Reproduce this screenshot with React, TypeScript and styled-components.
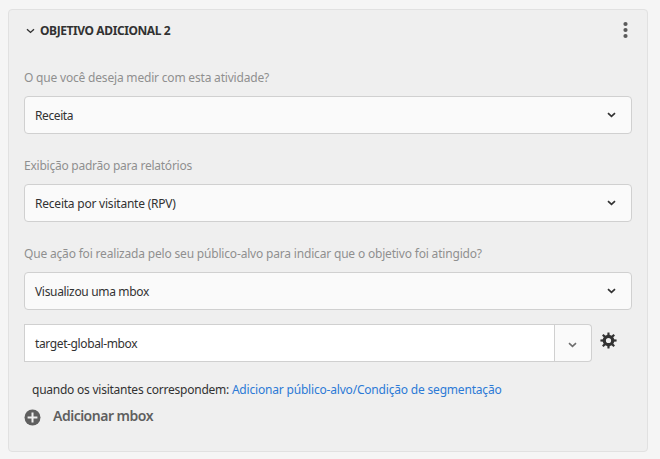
import React from "react";
import styled, { createGlobalStyle } from "styled-components";

const Global = createGlobalStyle`
  * { box-sizing: border-box; }
  body {
    margin: 0;
    background: #f5f5f5;
    color: #323232;
    font-family: "Noto Sans", "Open Sans", sans-serif;
    font-size: 12px;
  }
  button { margin: 0; padding: 0; border: 0; background: none; font: inherit; color: inherit; letter-spacing: inherit; }
  svg { display: block; flex: none; }
`;

const Page = styled.main`
  height: 459px;
  padding: 9px 12px 7px 8px;
`;

const Panel = styled.section`
  height: 443px;
  padding: 0 15px;
  border: 1px solid #e1e1e1;
  border-radius: 4px;
  background: #efefef;
`;

const Header = styled.header`
  display: flex;
  align-items: center;
  height: 41px;
  margin-bottom: 7px;
  padding: 0 4px 0 2px;
`;

const Title = styled.h2`
  flex: 1;
  margin: 0 0 0 5px;
  font-size: 12px;
  font-weight: 700;
  letter-spacing: -0.41px;
`;

const MenuButton = styled.button`
  padding-bottom: 2px;
`;

const Field = styled.div`
  height: 76px;
  margin-bottom: 12px;
`;

const Label = styled.div<{ $tracking: number }>`
  height: 38px;
  line-height: 39px;
  color: #8f8f8f;
  letter-spacing: ${(p) => p.$tracking}px;
  white-space: nowrap;
`;

const Select = styled.button<{ $tracking: number }>`
  display: flex;
  align-items: center;
  justify-content: space-between;
  width: 100%;
  height: 38px;
  padding: 0 15px 0 10px;
  border: 1px solid #d0d0d0;
  border-radius: 4px;
  background: #fafafa;
  letter-spacing: ${(p) => p.$tracking}px;
`;

const MboxRow = styled.div`
  display: flex;
  height: 38px;
  margin-top: 14px;
`;

const MboxName = styled.div`
  display: flex;
  align-items: center;
  width: 531px;
  padding-left: 10px;
  border: 1px solid #d0d0d0;
  background: #fff;
  letter-spacing: -0.38px;
`;

const MboxToggle = styled.button`
  display: flex;
  align-items: center;
  justify-content: center;
  width: 37px;
  padding: 4px 1px 0 0;
  border: 1px solid #d0d0d0;
  border-left: 0;
  border-radius: 0 4px 4px 0;
  background: #fafafa;
  color: #6e6e6e;
`;

const GearButton = styled.button`
  align-self: flex-start;
  margin: 8px 0 0 8px;
`;

const Audience = styled.p`
  margin: 18px 0 0 8px;
  line-height: 20px;
  letter-spacing: -0.24px;
  white-space: nowrap;
`;

const Link = styled.a`
  color: #2c7ad6;
  letter-spacing: -0.19px;
`;

const AddButton = styled.button`
  display: flex;
  align-items: center;
  gap: 12px;
  height: 20px;
  margin-top: 7px;
  color: #5f5f5f;
  font-size: 14px;
  font-weight: 600;
  letter-spacing: -0.5px;
`;

const AddText = styled.span`
  line-height: 18px;
  padding-bottom: 2px;
`;

const Chevron = ({ weight = 1.6 }: { weight?: number }) => (
  <svg width="9" height="6" viewBox="0 0 9 6" fill="none" stroke="currentColor" strokeWidth={weight}>
    <path d="M1 1.2 4.5 4.4 8 1.2" />
  </svg>
);

const Dots = () => (
  <svg width="5" height="18" viewBox="0 0 5 18" fill="#5a5a5a">
    <circle cx="2.5" cy="3" r="2.1" />
    <circle cx="2.5" cy="9" r="2.1" />
    <circle cx="2.5" cy="15" r="2.1" />
  </svg>
);

const teeth = [0, 45, 90, 135, 180, 225, 270, 315];

const Gear = () => (
  <svg width="17" height="17" viewBox="0 0 17 17">
    <circle cx="8.5" cy="8.5" r="4.2" fill="none" stroke="#323232" strokeWidth="3.2" />
    {teeth.map((angle) => (
      <path key={angle} d="M7.3 3.5 7.5.4h2l.2 3.1z" fill="#323232" transform={`rotate(${angle} 8.5 8.5)`} />
    ))}
  </svg>
);

const Plus = () => (
  <svg width="17" height="17" viewBox="0 0 17 17">
    <circle cx="8.5" cy="8.5" r="8" fill="#5f5f5f" />
    <path d="M8.5 3.6v9.8M3.6 8.5h9.8" stroke="#efefef" strokeWidth="2" />
  </svg>
);

const fields = [
  { label: "O que você deseja medir com esta atividade?", value: "Receita", labelTracking: -0.19, valueTracking: -0.4 },
  { label: "Exibição padrão para relatórios", value: "Receita por visitante (RPV)", labelTracking: -0.24, valueTracking: -0.22 },
  {
    label: "Que ação foi realizada pelo seu público-alvo para indicar que o objetivo foi atingido?",
    value: "Visualizou uma mbox",
    labelTracking: -0.18,
    valueTracking: -0.33,
  },
];

export default function App() {
  return (
    <>
      <Global />
      <Page>
        <Panel>
          <Header>
            <Chevron weight={1.4} />
            <Title>OBJETIVO ADICIONAL 2</Title>
            <MenuButton aria-label="Mais opções"><Dots /></MenuButton>
          </Header>
          {fields.map((f) => (
            <Field key={f.label}>
              <Label $tracking={f.labelTracking}>{f.label}</Label>
              <Select $tracking={f.valueTracking}>
                <span>{f.value}</span>
                <Chevron weight={1.7} />
              </Select>
            </Field>
          ))}
          <MboxRow>
            <MboxName>target-global-mbox</MboxName>
            <MboxToggle aria-label="Abrir lista"><Chevron /></MboxToggle>
            <GearButton aria-label="Configurações"><Gear /></GearButton>
          </MboxRow>
          <Audience>
            quando os visitantes correspondem: <Link>Adicionar público-alvo/Condição de segmentação</Link>
          </Audience>
          <AddButton>
            <Plus />
            <AddText>Adicionar mbox</AddText>
          </AddButton>
        </Panel>
      </Page>
    </>
  );
}
